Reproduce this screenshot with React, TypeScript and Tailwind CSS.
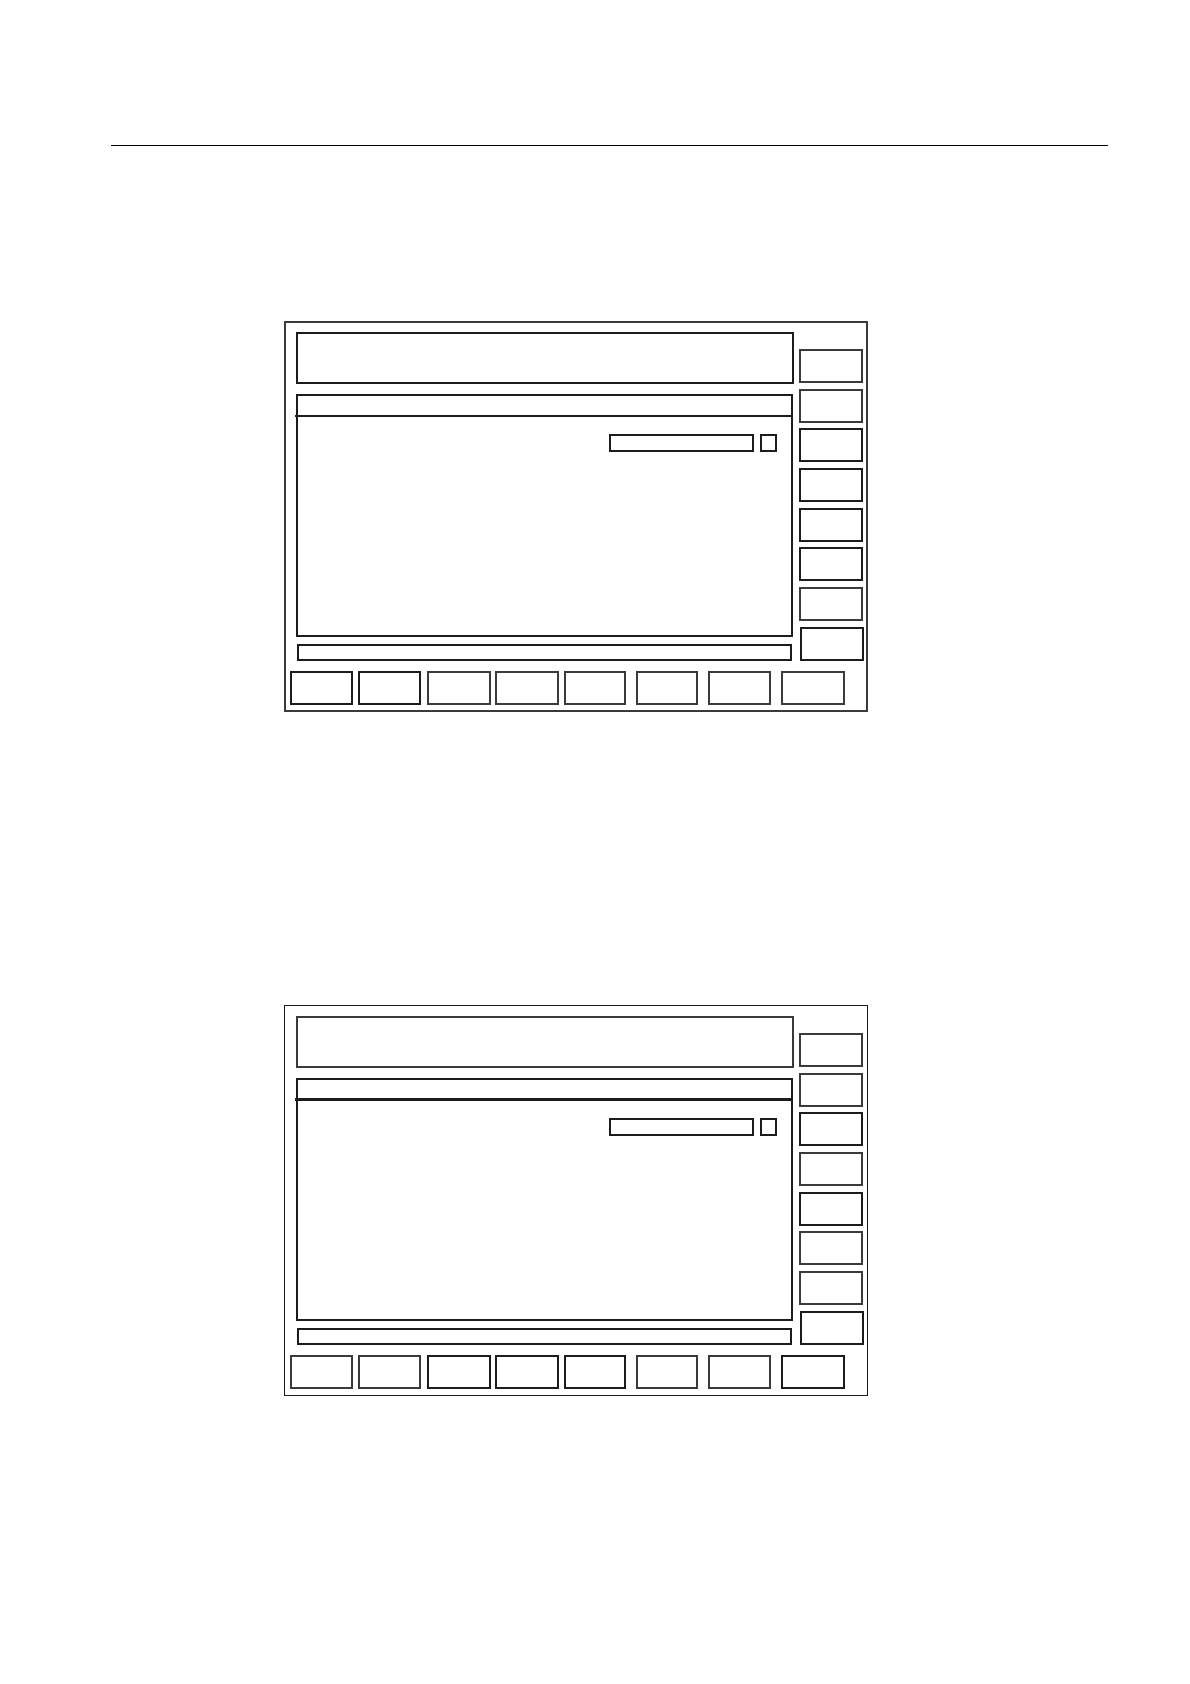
const ink = 'border-[#1c1c1c]';

// bottom soft-key row: left margin + width, as measured
const bottomKeys = [
  'ml-[5px] w-[63px]',
  'ml-[5px] w-[63px]',
  'ml-[6px] w-[64px]',
  'ml-[4px] w-[64px]',
  'ml-[5px] w-[62px]',
  'ml-[10px] w-[62px]',
  'ml-[10px] w-[63px]',
  'ml-[10px] w-[64px]',
];

interface ScreenProps {
  thinTop?: boolean;
  heavyHeader?: boolean;
  thinFrame?: boolean;
  bottomWeights: number[];
  sideWeights: number[];
}

// 2 = heavy line, 1 = medium line (2px, a bit softer)
const bw = (n: number) =>
  n === 2 ? 'border-2 border-[#1c1c1c]' : 'border-2 border-[#3a3a3a]';

function Screen({ thinTop, heavyHeader, thinFrame, bottomWeights, sideWeights }: ScreenProps) {
  return (
    <div
      className={`w-[584px] h-[391px] bg-white ${
        thinFrame ? 'border border-[#1c1c1c]' : 'border-2 border-[#3a3a3a]'
      }`}
    >
      <div className={`flex pl-[11px] ${thinFrame ? 'pt-[10px]' : 'pt-[9px] -ml-px'}`}>
        {/* left: title area, list panel, status line */}
        <div className="w-[498px]">
          <div className={`h-[52px] border-2 ${thinTop ? 'border-[#3a3a3a]' : ink}`} />
          <div className={`mt-[10px] w-[497px] h-[243px] border-2 ${ink}`}>
            <div
              className={`h-[21px] -ml-[3px] ${heavyHeader ? 'border-b-[3px]' : 'border-b-2'} ${ink}`}
            />
            <div className="flex justify-end gap-[6px] pt-[17px] pr-[14px]">
              <div className={`w-[145px] h-[18px] border-2 ${ink}`} />
              <div className={`w-[17px] h-[18px] border-2 ${ink}`} />
            </div>
          </div>
          <div className={`mt-[7px] ml-[1px] w-[495px] h-[17px] border-2 ${ink}`} />
        </div>
        {/* right: side soft keys */}
        <div className="ml-[5px] pt-[17px] flex flex-col gap-[5.7px]">
          {sideWeights.map((w, i) => (
            <div
              key={i}
              className={`h-[34px] ${i === 7 ? 'w-[64px] ml-px' : 'w-[64px]'} ${bw(w)}`}
            />
          ))}
        </div>
      </div>
      <div className={`flex mt-[10px] ${thinFrame ? '' : '-ml-px'}`}>
        {bottomKeys.map((k, i) => (
          <div key={i} className={`h-[34px] ${k} ${bw(bottomWeights[i])}`} />
        ))}
      </div>
    </div>
  );
}

export default function App() {
  return (
    <div className="w-[1190px] h-[1684px] bg-white overflow-hidden">
      <div className="pt-[145px] pl-[111px]">
        <div className="w-[997px] h-px bg-black" />
      </div>
      <div className="pl-[284px] pt-[175px]">
        <Screen
          bottomWeights={[2, 2, 1, 1, 1, 1, 1, 1]}
          sideWeights={[1, 1, 2, 2, 2, 2, 1, 2]}
        />
      </div>
      <div className="pl-[284px] pt-[293px]">
        <Screen
          thinTop
          heavyHeader
          thinFrame
          bottomWeights={[1, 1, 2, 2, 2, 1, 1, 2]}
          sideWeights={[1, 1, 2, 1, 2, 1, 1, 2]}
        />
      </div>
    </div>
  );
}
